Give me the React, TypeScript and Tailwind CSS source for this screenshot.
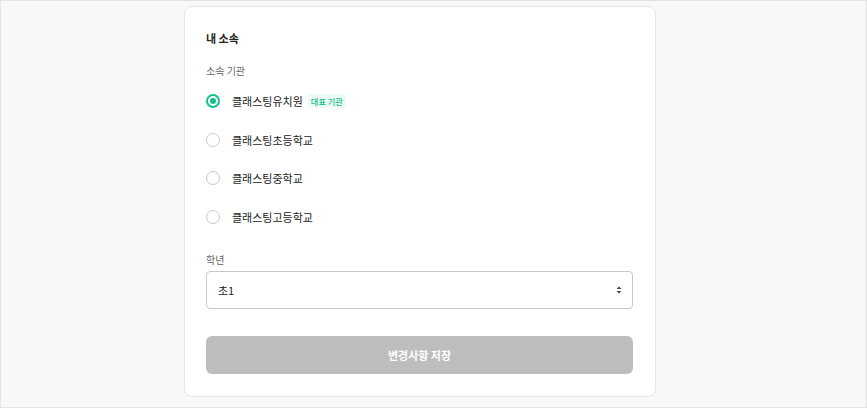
import React from 'react';

const schools = [
  { name: '클래스팅유치원', primary: true },
  { name: '클래스팅초등학교', primary: false },
  { name: '클래스팅중학교', primary: false },
  { name: '클래스팅고등학교', primary: false },
];

function Radio({ checked }: { checked: boolean }) {
  if (checked) {
    return (
      <span className="w-[14px] h-[14px] rounded-full border-2 border-[#16c08c] flex items-center justify-center">
        <span className="w-[6px] h-[6px] rounded-full bg-[#16c08c]" />
      </span>
    );
  }
  return <span className="w-[14px] h-[14px] rounded-full border-[1.5px] border-[#c8c8c8] bg-white" />;
}

export default function App() {
  return (
    <div
      className="w-[867px] h-[408px] border border-[#e3e3e3] bg-[#f8f8f8] pl-[183px] pt-[5px]"
      style={{ fontFamily: '"Noto Sans CJK KR", "Noto Sans", sans-serif' }}
    >
      <div className="w-[472px] h-[391px] bg-white border border-[#e6e6e6] rounded-lg px-[21px] pt-[22px]">
        <h2 className="h-[18px] leading-[18px] text-[11px] font-bold text-[#222]">내 소속</h2>

        <p className="mt-[16px] h-[16px] leading-[16px] text-[10px] text-[#666]">소속 기관</p>

        {/* Schools */}
        <div className="mt-[3px]">
          {schools.map((s) => (
            <div key={s.name} className="h-[38.5px] flex items-center">
              <Radio checked={s.primary} />
              <span className="ml-[12px] text-[11px] text-[#222]">{s.name}</span>
              {s.primary && (
                <span className="ml-[5px] px-[3px] h-[14px] leading-[14px] text-[8.2px] font-medium text-[#16c08c] bg-[#ecfbf5] rounded-sm">
                  대표 기관
                </span>
              )}
            </div>
          ))}
        </div>

        <p className="mt-[16px] h-[16px] leading-[16px] text-[10px] text-[#666]">학년</p>

        <div className="mt-[3px] h-[38px] w-[427px] border border-[#c8c8c8] rounded-[4px] flex items-center justify-between pl-[11px] pr-[8px]">
          <span className="text-[11px] text-[#222]">초1</span>
          <svg width="10" height="12" viewBox="0 0 10 12">
            <path d="M5 2.5 L7.5 5 L2.5 5 Z" fill="#444" />
            <path d="M5 9.5 L7.5 7 L2.5 7 Z" fill="#444" />
          </svg>
        </div>

        <button
          disabled
          className="mt-[27px] h-[38px] w-[427px] rounded-md bg-[#bdbdbd] text-white text-[11px] font-bold flex items-center justify-center"
        >
          변경사항 저장
        </button>
      </div>
    </div>
  );
}
